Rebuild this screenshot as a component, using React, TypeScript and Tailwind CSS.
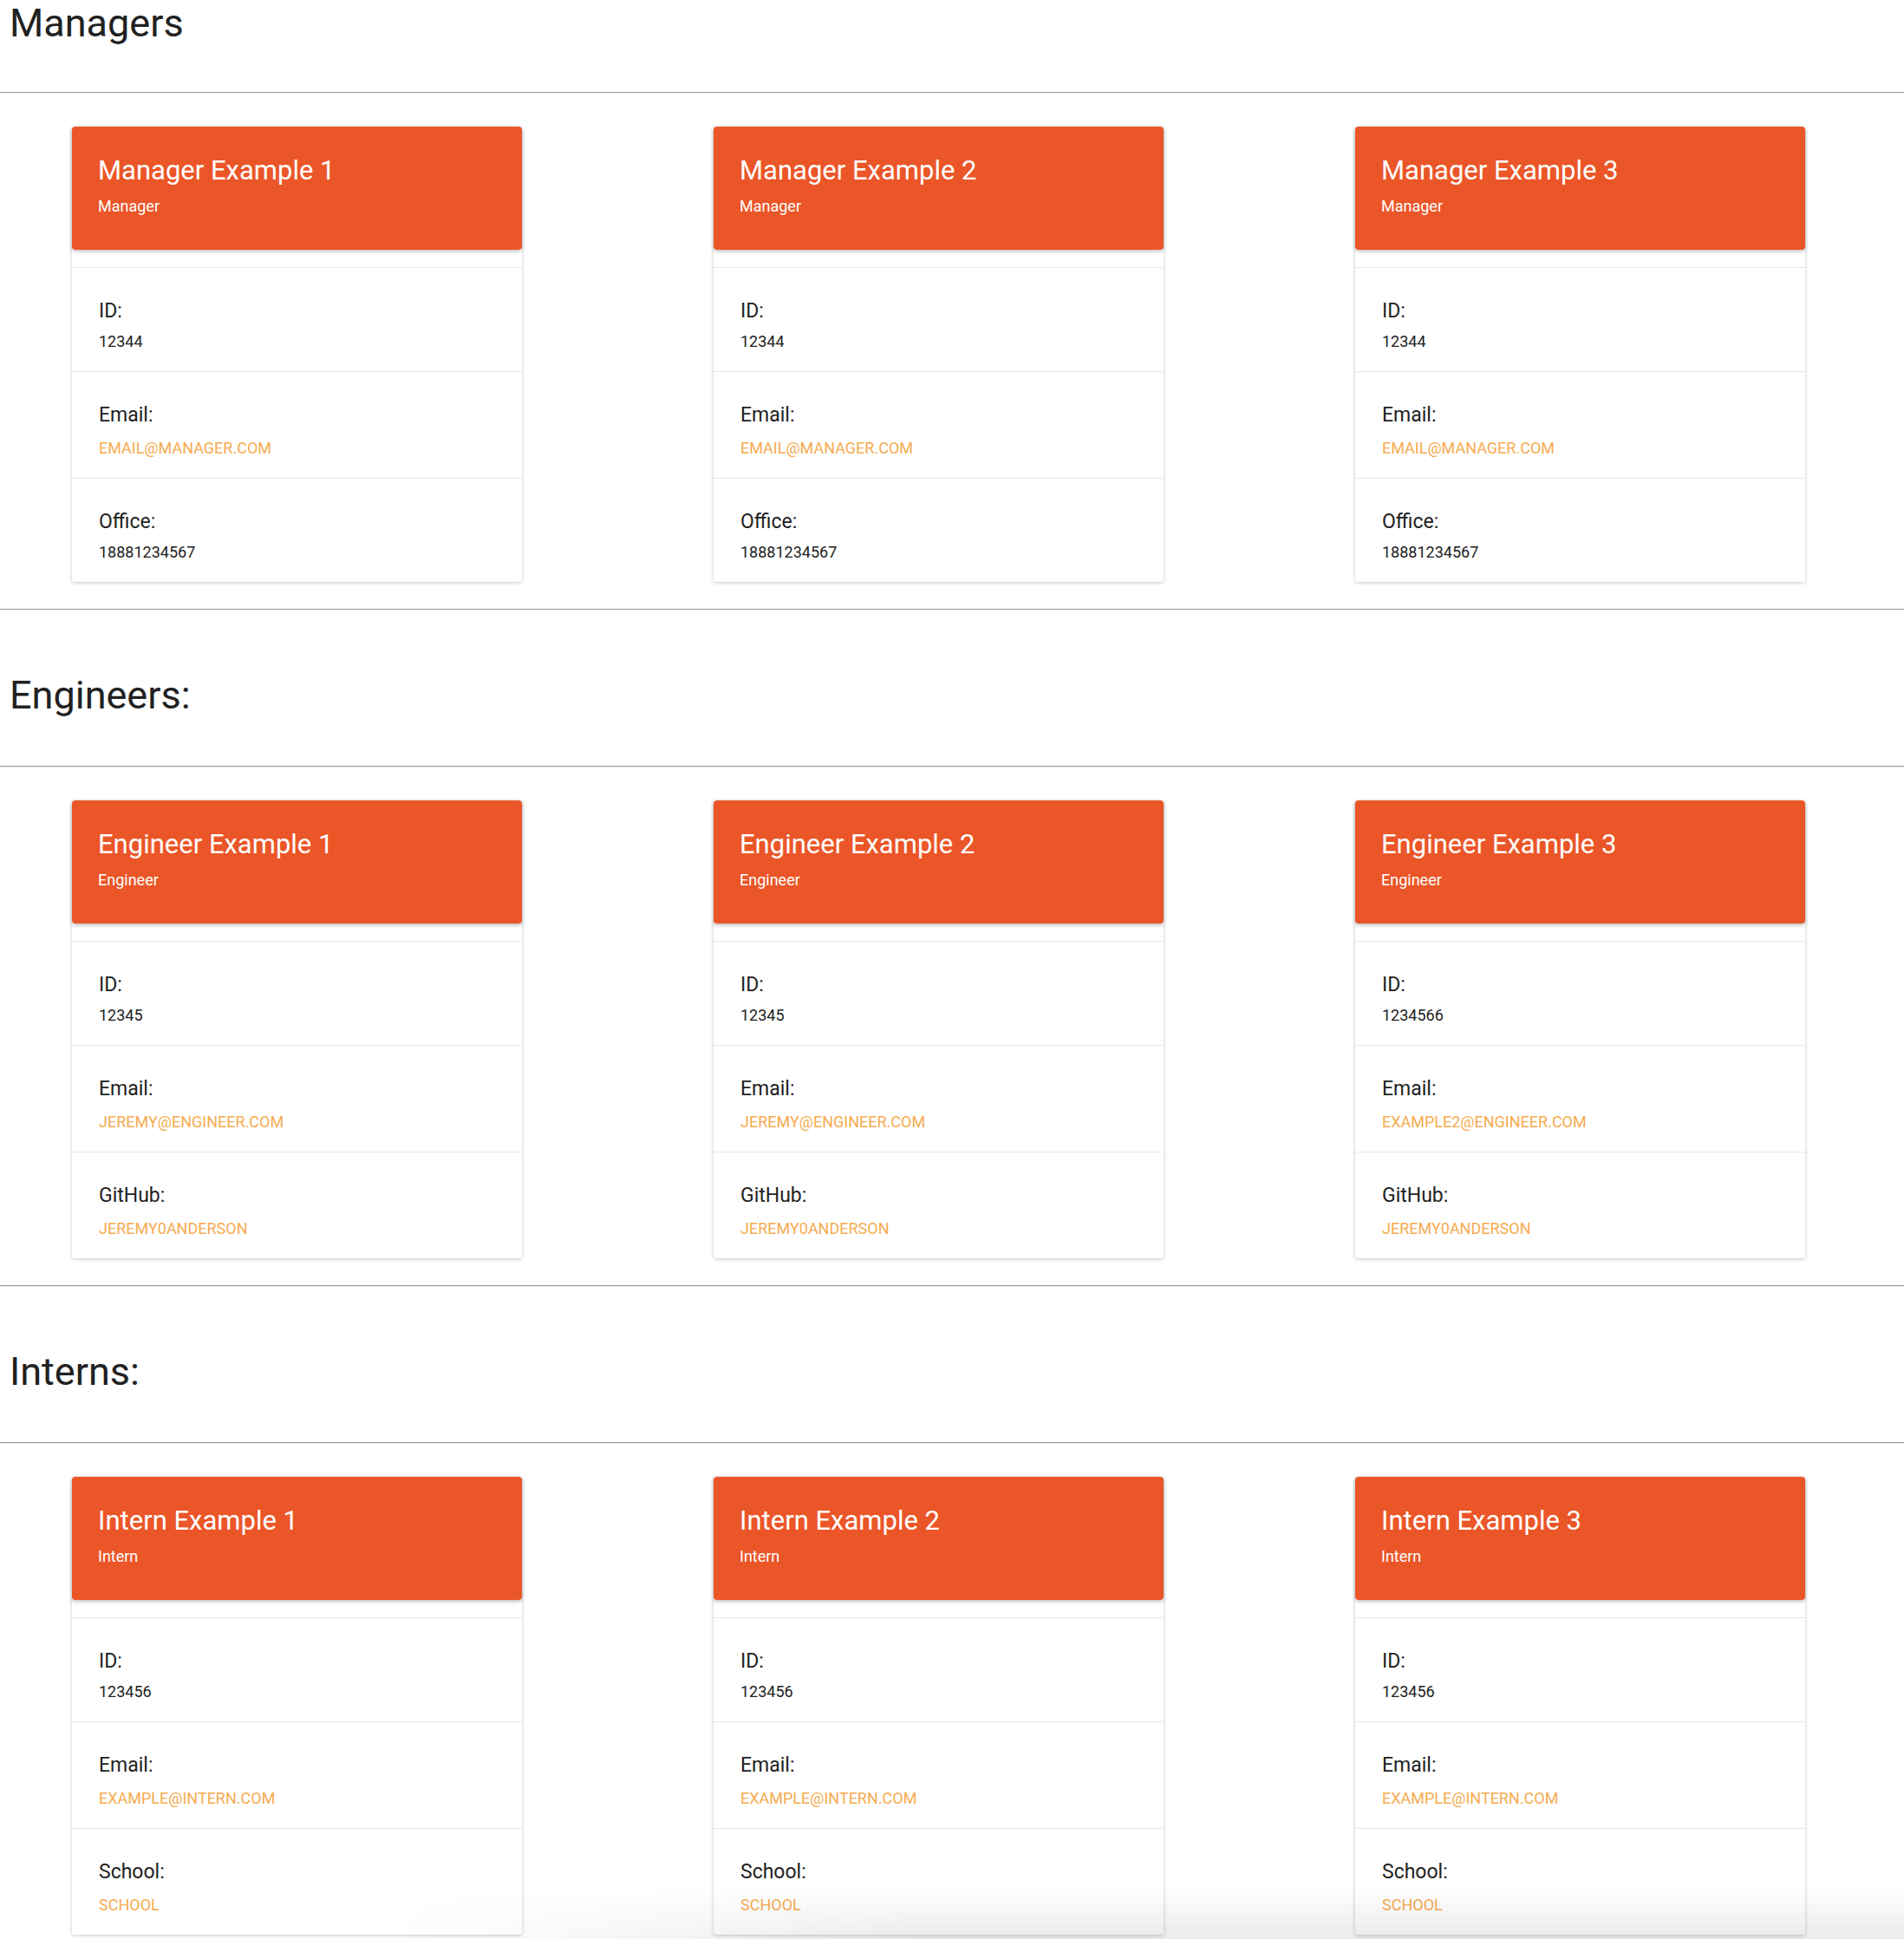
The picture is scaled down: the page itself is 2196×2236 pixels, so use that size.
import React from 'react';

type Field = { label: string; value: string; link?: boolean };

interface Employee {
  name: string;
  role: string;
  fields: Field[];
}

const managers: Employee[] = [1, 2, 3].map((n) => ({
  name: `Manager Example ${n}`,
  role: 'Manager',
  fields: [
    { label: 'ID:', value: '12344' },
    { label: 'Email:', value: 'email@manager.com', link: true },
    { label: 'Office:', value: '18881234567' },
  ],
}));

const engineers: Employee[] = [
  { id: '12345', email: 'jeremy@engineer.com' },
  { id: '12345', email: 'jeremy@engineer.com' },
  { id: '1234566', email: 'example2@engineer.com' },
].map((e, i) => ({
  name: `Engineer Example ${i + 1}`,
  role: 'Engineer',
  fields: [
    { label: 'ID:', value: e.id },
    { label: 'Email:', value: e.email, link: true },
    { label: 'GitHub:', value: 'jeremy0anderson', link: true },
  ],
}));

const interns: Employee[] = [1, 2, 3].map((n) => ({
  name: `Intern Example ${n}`,
  role: 'Intern',
  fields: [
    { label: 'ID:', value: '123456' },
    { label: 'Email:', value: 'example@intern.com', link: true },
    { label: 'School:', value: 'school', link: true },
  ],
}));

function Divider() {
  return <div className="h-0 border-t border-b border-t-[#9b9b9b] border-b-[#ededed]" />;
}

function EmployeeCard({ employee }: { employee: Employee }) {
  return (
    <div className="w-[519px] bg-white rounded-[3px] shadow-[0_1px_4px_rgba(0,0,0,0.22)]">
      {/* header */}
      <div className="h-[142px] bg-[#eb5628] rounded-[4px] px-[30px] pt-[32px] shadow-[0_2px_4px_rgba(0,0,0,0.25)] text-white">
        <div className="text-[31px] leading-[38px]">{employee.name}</div>
        <div className="mt-[8px] text-[18px] leading-[27px]">{employee.role}</div>
      </div>

      {/* details */}
      <div className="pt-[20px]">
        {employee.fields.map((f) => (
          <div key={f.label} className="border-t border-[#e8e8e8] px-[31px] pt-[33px] pb-[21px]">
            <div className="text-[23px] leading-[34px] text-[#212121]">{f.label}</div>
            {f.link ? (
              <a className="block mt-[7px] text-[18px] leading-[27px] uppercase text-[#f6ab50]">{f.value}</a>
            ) : (
              <div className="mt-[4px] text-[18px] leading-[27px] text-[#212121]">{f.value}</div>
            )}
          </div>
        ))}
      </div>
    </div>
  );
}

function Section({ title, employees, first }: { title: string; employees: Employee[]; first?: boolean }) {
  return (
    <section>
      <h2 className={`${first ? 'mt-0' : 'mt-[71px]'} pl-[11px] text-[45px] leading-[54px] text-[#212121]`}>{title}</h2>
      <div className={first ? 'mt-[52px]' : 'mt-[54px]'}>
        <Divider />
      </div>
      <div className="mt-[38px] flex gap-[221px] pl-[83px]">
        {employees.map((e) => (
          <EmployeeCard key={e.name} employee={e} />
        ))}
      </div>
      <div className="mt-[31px]">
        <Divider />
      </div>
    </section>
  );
}

export default function App() {
  return (
    <div className="relative h-[2236px] w-[2196px] overflow-hidden bg-white font-['Roboto',sans-serif]">
      <Section title="Managers" employees={managers} first />
      <Section title="Engineers:" employees={engineers} />
      <Section title="Interns:" employees={interns} />
      {/* faint fade at the bottom edge of the screenshot */}
      <div className="pointer-events-none absolute bottom-0 left-[450px] right-0 h-[60px] bg-gradient-to-b from-transparent to-black/[0.08] [mask-image:linear-gradient(to_right,transparent,black_35%)]" />
    </div>
  );
}
